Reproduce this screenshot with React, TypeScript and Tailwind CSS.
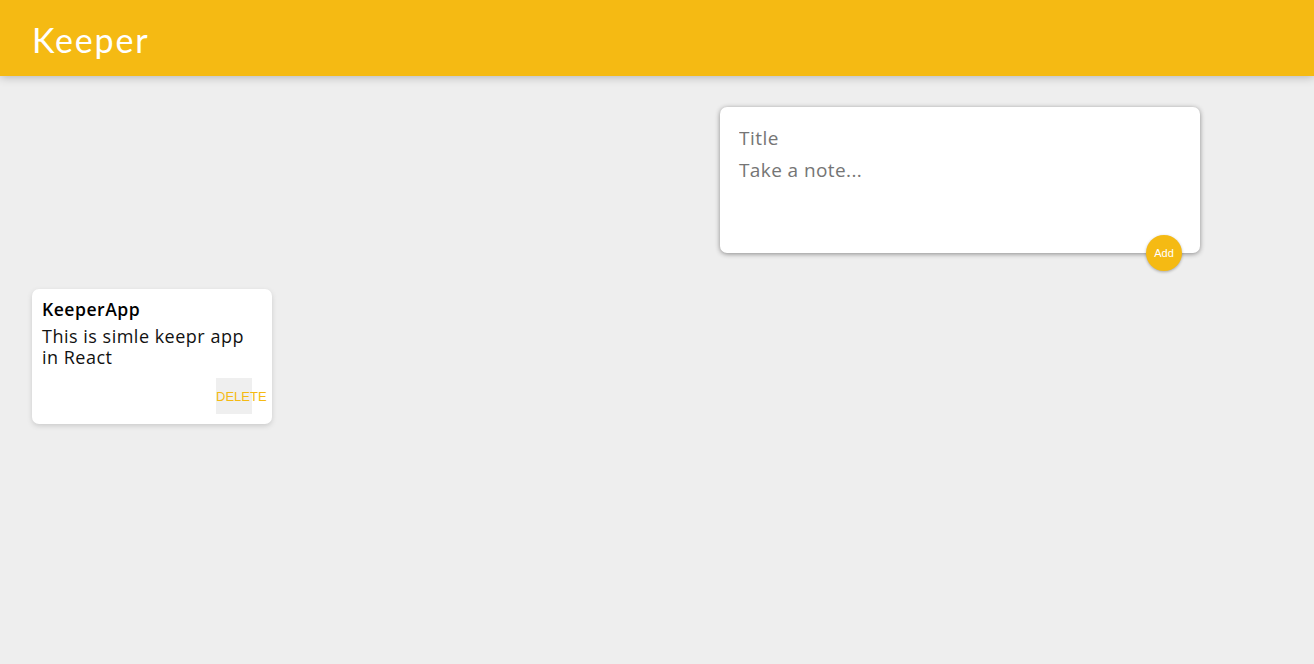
import React from 'react';

const notes = [
  {
    title: 'KeeperApp',
    content: 'This is simle keepr app in React',
  },
];

const Header: React.FC = () => (
  <header className="h-[76px] bg-[#f5ba13] px-8 flex items-center shadow-[0_0_10px_0_rgba(0,0,0,0.3)] relative">
    <h1 className="text-white text-[34px] font-['Lato',sans-serif] font-normal tracking-[1.8px] leading-none pt-[4px]">
      Keeper
    </h1>
  </header>
);

const CreateArea: React.FC = () => (
  <div className="flex pt-[31px] pb-5 pl-[720px]">
    <form className="relative w-[480px] bg-white rounded-[7px] p-[15px] shadow-[0_1px_5px_rgb(138,137,137)]">
      <input
        name="title"
        placeholder="Title"
        className="block w-full h-[30px] px-1 pt-[2px] outline-none text-[19px] tracking-[0.5px] font-['Open_Sans',sans-serif] placeholder:text-[#757575]"
      />
      <textarea
        name="content"
        placeholder="Take a note..."
        rows={3}
        className="block w-full h-[86px] px-1 pt-[7px] pb-1 outline-none resize-none text-[19px] leading-[23px] tracking-[0.4px] font-['Open_Sans',sans-serif] placeholder:text-[#757575]"
      />
      <button
        type="button"
        className="absolute right-[18px] bottom-[-18px] w-9 h-9 rounded-full bg-[#f5ba13] text-white text-[11px] font-['Liberation_Sans',sans-serif] shadow-[0_1px_3px_rgba(0,0,0,0.3)]"
      >
        Add
      </button>
    </form>
  </div>
);

const Note: React.FC<{ title: string; content: string }> = ({ title, content }) => (
  <div className="w-[240px] m-4 p-[10px] bg-white rounded-[7px] shadow-[0_2px_5px_#ccc] font-['Open_Sans',sans-serif]">
    <h1 className="text-[17.6px] leading-[21px] font-semibold tracking-[0.5px] text-black mb-[6px]">{title}</h1>
    <p className="text-[18px] leading-[21px] tracking-[0.5px] text-[#111] mb-[10px]">{content}</p>
    <div className="flex justify-end pr-[10px]">
      <button
        type="button"
        className="w-9 h-9 pt-[1px] bg-[#efefef] text-[#f5ba13] text-[13px] font-['Liberation_Sans',sans-serif] whitespace-nowrap overflow-visible text-left"
      >
        DELETE
      </button>
    </div>
  </div>
);

const App: React.FC = () => {
  return (
    <div className="min-h-screen bg-[#eeeeee]">
      <Header />
      <CreateArea />
      <div className="px-4 flex flex-wrap">
        {notes.map((note, index) => (
          <Note key={index} title={note.title} content={note.content} />
        ))}
      </div>
    </div>
  );
};

export default App;
